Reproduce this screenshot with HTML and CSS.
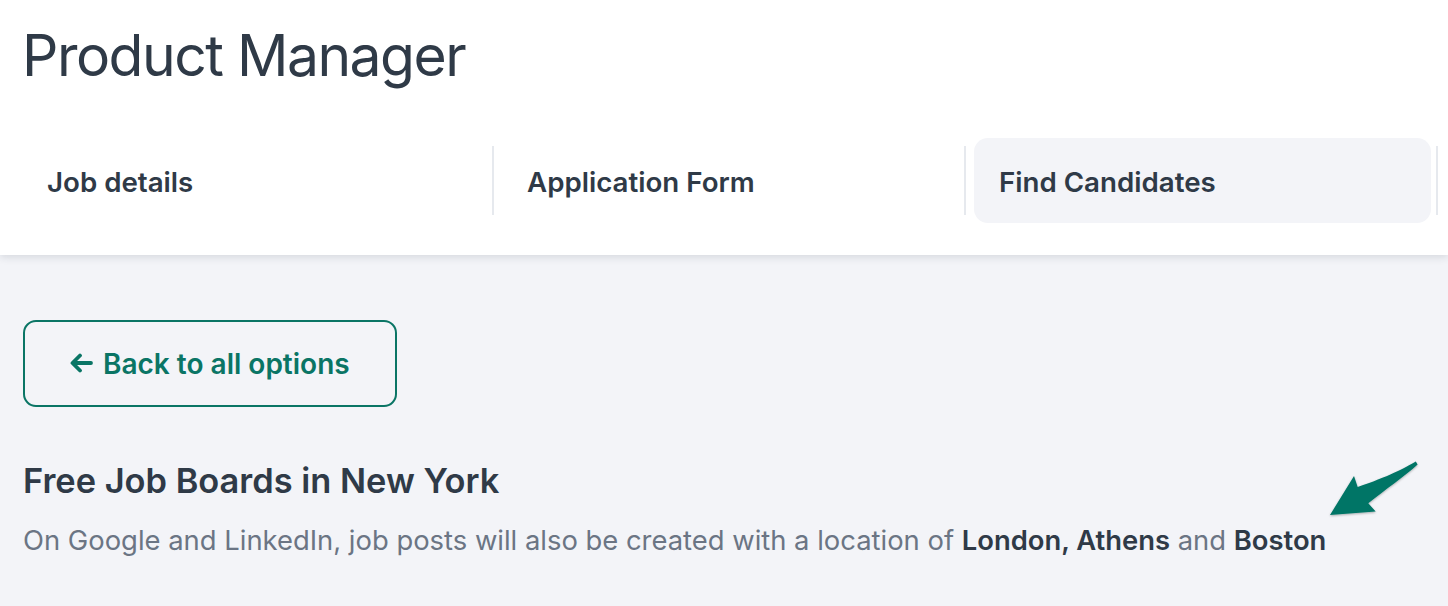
FILE: index.html
```html
<!DOCTYPE html>
<html>
<head>
<meta charset="utf-8">
<link rel="stylesheet" href="styles.css">
</head>
<body>
<header class="header">
  <h1 class="title">Product Manager</h1>
  <nav class="tabs">
    <div class="tab-cell"><div class="tab">Job details</div></div>
    <div class="tab-cell"><div class="tab">Application Form</div></div>
    <div class="tab-cell"><div class="tab active">Find Candidates</div></div>
  </nav>
</header>
<main class="content">
  <button class="back-btn">
    <svg class="back-icon" width="24" height="20" viewBox="0 0 24 20"><path d="M22 10H4M11 2.5L3.5 10 11 17.5" fill="none" stroke="currentColor" stroke-width="3.8" stroke-linecap="round" stroke-linejoin="round"/></svg>
    Back to all options
  </button>
  <h2 class="section-title">Free Job Boards in New York</h2>
  <p class="desc">On Google and LinkedIn, job posts will also be created with a location of <strong>London, Athens</strong> and <strong>Boston</strong></p>
  <svg class="pointer" width="120" height="80" viewBox="0 0 120 80">
    <defs>
      <filter id="sh" x="-20%" y="-20%" width="140%" height="140%">
        <feDropShadow dx="0" dy="1" stdDeviation="1" flood-color="#000" flood-opacity="0.3"/>
      </filter>
    </defs>
    <path d="M105.8 11.6 C95 18 78 27 47.7 37 L44 26 L20 65 L65.7 61.5 L58.3 53.3 C75 40 95 26 107.6 14.6 Z" fill="#067566" filter="url(#sh)"/>
  </svg>
</main>
</body>
</html>
```
FILE: styles.css
```css
* { box-sizing: border-box; }
html, body { margin: 0; padding: 0; }
body {
  font-family: Inter, "Noto Sans", sans-serif;
  background: #f3f4f8;
  color: #2f3a47;
  width: 1448px;
  height: 606px;
  overflow: hidden;
}
.header {
  background: #fff;
  height: 255px;
  padding: 20px 0 0 22px;
  box-shadow: 0 2px 8px rgba(30, 40, 60, 0.14);
  position: relative;
  z-index: 1;
}
.title {
  margin: 0;
  font-size: 57px;
  font-weight: 400;
  line-height: 72px;
  letter-spacing: -1.5px;
  color: #2f3a47;
}
.tabs {
  display: grid;
  grid-template-columns: repeat(3, 472px);
  margin-top: 46px;
}
.tab-cell {
  display: flex;
  align-items: center;
  position: relative;
}
.tab-cell::after {
  content: "";
  position: absolute;
  right: 0;
  top: 8px;
  width: 2px;
  height: 69px;
  background: #e6e9ee;
}
.tab {
  flex: 1;
  height: 85px;
  margin: 0 7px 0 8px;
  padding: 2px 25px 0;
  display: flex;
  align-items: center;
  font-size: 27.7px;
  font-weight: 600;
  color: #2f3a47;
  border-radius: 14px;
}
.tab-cell:first-child .tab { margin-left: 0; }
.tab.active { background: #f3f4f8; }
.content {
  padding: 65px 22px 0 23px;
  position: relative;
}
.back-btn {
  display: flex;
  align-items: center;
  gap: 10px;
  width: 374px;
  height: 87px;
  padding: 0 0 0 44px;
  border: 2px solid #0a7565;
  border-radius: 13px;
  background: transparent;
  color: #0a7565;
  font-family: Inter, "Noto Sans", sans-serif;
  font-size: 28px;
  font-weight: 600;
}
.back-icon { flex: none; margin-top: -1px; }
.section-title {
  margin: 54px 0 0;
  font-size: 34.4px;
  font-weight: 600;
  line-height: 40px;
  color: #2f3a47;
}
.desc {
  margin: 21px 0 0;
  font-size: 27.4px;
  line-height: 36px;
  color: #6b7584;
}
.desc strong { color: #2f3a47; font-weight: 600; }
.pointer {
  position: absolute;
  left: 1310px;
  top: 195px;
}
```
